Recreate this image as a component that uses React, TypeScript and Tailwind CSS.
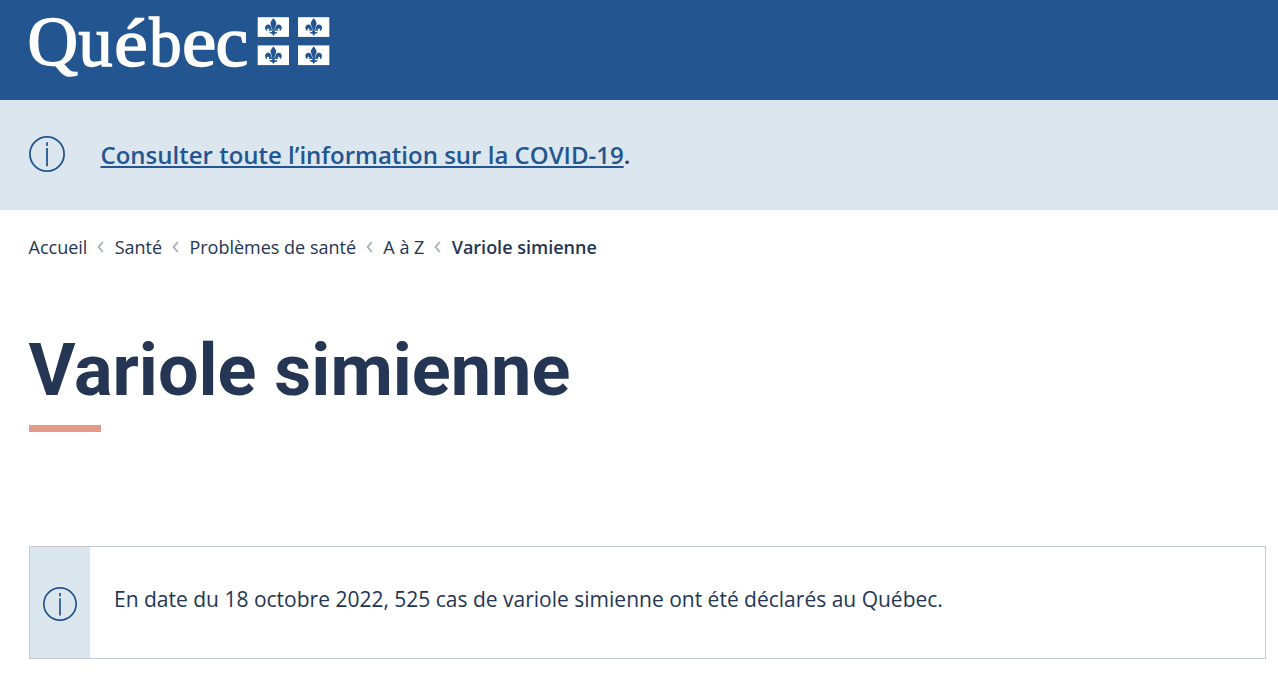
const letters = [
  { char: "Q", x: 27.6, y: 65.4, sx: 1, size: 70 },
  { char: "u", x: 78.5, y: 66, sx: 0.96, size: 71 },
  { char: "é", x: 114.2, y: 65.6, sx: 1.1, size: 68.5 },
  { char: "b", x: 149.2, y: 65.6, sx: 0.93, size: 69.5 },
  { char: "e", x: 181.9, y: 65.8, sx: 1.09, size: 71 },
  { char: "c", x: 215.6, y: 65.8, sx: 1.04, size: 71 },
];

const flags = [
  [257.7, 17.2],
  [298, 17.2],
  [257.7, 45.4],
  [298, 45.4],
];

function FleurDeLis() {
  return (
    <g fill="#235690">
      <path d="M15.7 1 C14.2 2.8 12.5 4.7 12.8 6.7 C13.1 8.6 14.5 10 14.6 12.5 H16.8 C16.9 10 18.3 8.6 18.6 6.7 C18.9 4.7 17.2 2.8 15.7 1Z" />
      <path d="M14.1 12.5 C14 9.3 12.4 7.2 10.1 7.4 C8 7.6 6.9 9.6 7.5 11.5 C7.8 12.6 8.6 13.5 9.5 13.7 C9.2 12.5 9.4 11.4 10.2 11.4 C11.1 11.4 11.5 11.9 11.5 12.5Z" />
      <path d="M17.3 12.5 C17.4 9.3 19 7.2 21.3 7.4 C23.4 7.6 24.5 9.6 23.9 11.5 C23.6 12.6 22.8 13.5 21.9 13.7 C22.2 12.5 22 11.4 21.2 11.4 C20.3 11.4 19.9 11.9 19.9 12.5Z" />
      <path d="M11.2 12.3 H20.2 V13.5 H11.2Z" />
      <path d="M14.6 13.5 H16.8 C16.9 15 18 15.4 19.8 14.4 C19.5 16.1 18.3 16.7 17.1 16.5 L15.7 18.7 L14.3 16.5 C13.1 16.7 11.9 16.1 11.6 14.4 C13.4 15.4 14.5 15 14.6 13.5Z" />
    </g>
  );
}

function Logo() {
  return (
    <svg width="340" height="100" viewBox="0 0 340 100" className="block" role="img" aria-label="Québec">
      <g className="font-['Liberation_Serif',serif]" fill="#fff" stroke="#fff" strokeWidth="1.5">
        {letters.map((l, i) => (
          <text key={i} fontSize={l.size} transform={`translate(${l.x} ${l.y}) scale(${l.sx} 1)`}>
            {l.char}
          </text>
        ))}
      </g>
      {flags.map(([x, y], i) => (
        <g key={i} transform={`translate(${x} ${y})`}>
          <rect width="31.3" height="19.7" fill="#fff" />
          <FleurDeLis />
        </g>
      ))}
    </svg>
  );
}

function InfoIcon({ className }: { className: string }) {
  return (
    <svg viewBox="0 0 36 36" className={className} fill="none" stroke="#235690" strokeWidth="1.8" aria-hidden="true">
      <circle cx="18" cy="18" r="17.1" />
      <path d="M18 6.3V9.8M18 12V30.2" />
    </svg>
  );
}

function Chevron() {
  return (
    <svg viewBox="0 0 7 12" className="mr-[10.3px] ml-[10px] h-3 w-[7px]" fill="none" stroke="#a9b0bd" strokeWidth="1.9" aria-hidden="true">
      <path d="M5.8 1L1.6 6L5.8 11" />
    </svg>
  );
}

const crumbs = ["Accueil", "Santé", "Problèmes de santé", "A à Z"];

export default function App() {
  return (
    <div className="h-[690px] overflow-hidden bg-white font-['Open_Sans',sans-serif] text-[#243653]">
      <header className="h-[100px] bg-[#235690]">
        <Logo />
      </header>
      <div className="flex h-[110px] items-center bg-[#dce6ee] pl-[29px]">
        <InfoIcon className="mb-0.5 h-9 w-9" />
        <p className="ml-[35.5px] text-[24px] leading-9 font-semibold">
          <a href="#" className="text-[#235690] underline decoration-2 underline-offset-2 [text-decoration-skip-ink:none]">
            Consulter toute l’information sur la COVID-19
          </a>
          .
        </p>
      </div>
      <main className="pr-3 pl-[29px]">
        <nav className="-ml-[0.5px] flex h-[74px] items-center text-[18px] leading-6">
          {crumbs.map((c) => (
            <span key={c} className="flex items-center">
              <a href="#">{c}</a>
              <Chevron />
            </span>
          ))}
          <span className="font-semibold">Variole simienne</span>
        </nav>
        <h1 className="mt-[47px] -ml-[0.5px] font-['Roboto',sans-serif] text-[72px] leading-[80px] font-bold">Variole simienne</h1>
        <div className="mt-[14px] h-[7px] w-[72px] bg-[#e3998a]" />
        <section className="mt-[114px] flex h-[113px] border border-[#c5cad2]">
          <div className="flex w-[60px] items-center justify-center bg-[#dce6ee]">
            <InfoIcon className="mt-[2px] h-[34px] w-[34px]" />
          </div>
          <p className="mt-[36px] ml-6 text-[21px] leading-8">
            En date du 18 octobre 2022, 525 cas de variole simienne ont été déclarés au Québec.
          </p>
        </section>
      </main>
    </div>
  );
}
